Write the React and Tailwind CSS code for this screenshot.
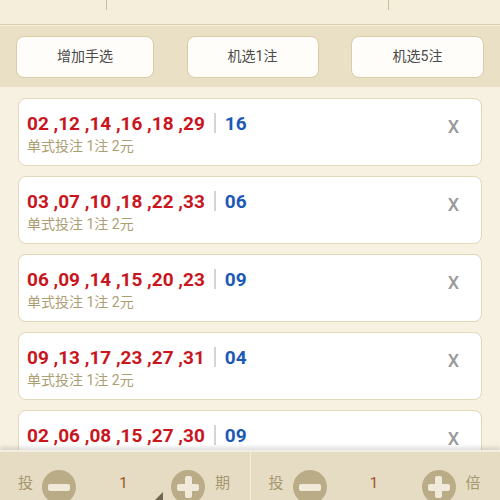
import React from 'react';

const tickets = [
  { reds: '02 ,12 ,14 ,16 ,18 ,29', blue: '16' },
  { reds: '03 ,07 ,10 ,18 ,22 ,33', blue: '06' },
  { reds: '06 ,09 ,14 ,15 ,20 ,23', blue: '09' },
  { reds: '09 ,13 ,17 ,23 ,27 ,31', blue: '04' },
  { reds: '02 ,06 ,08 ,15 ,27 ,30', blue: '09' },
];

const font = { fontFamily: 'Roboto, "Noto Sans CJK SC", sans-serif' };

function Circle({ plus }) {
  return (
    <div className="relative w-[34px] h-[34px] rounded-full bg-[#b9ac86] shrink-0 flex items-center justify-center">
      <div className="w-[22px] h-[7px] rounded-[2px] bg-[#f1eadb]" />
      {plus && <div className="absolute w-[7px] h-[22px] rounded-[2px] bg-[#f1eadb]" />}
    </div>
  );
}

function Stepper({ unit, showCorner }) {
  return (
    <div className="relative flex-1 flex items-start pt-[18px] pl-[18px]">
      <span className="text-[15px] text-[#a5976f] mt-[2px] w-[24px]">投</span>
      <Circle />
      <span className="text-[15px] text-[#9b5424] mt-[2px] w-[95px] text-center">1</span>
      <Circle plus />
      <span className="text-[15px] text-[#a5976f] mt-[2px] ml-[10px]">{unit}</span>
      {showCorner && (
        <div className="absolute left-[155px] bottom-0 w-0 h-0 border-l-[8px] border-l-transparent border-b-[8px] border-b-[#6f6750]" />
      )}
    </div>
  );
}

export default function App() {
  return (
    <div className="w-[500px] h-[500px] flex flex-col overflow-hidden bg-[#f7f1e2]" style={font}>
      <div className="h-[25px] bg-[#f5eedb] border-b border-[#d8ceb0] relative shrink-0">
        <div className="absolute left-[106px] top-0 w-[1px] h-[10px] bg-[#c8bd9c]" />
        <div className="absolute left-[388px] top-0 w-[1px] h-[10px] bg-[#c8bd9c]" />
      </div>
      <div className="h-[63px] shrink-0 bg-[#e9e0c6] border-t border-[#f7f1e2] border-b border-[#d6cbab] flex items-center justify-between px-[16px]">
        <button className="w-[138px] h-[42px] rounded-[8px] bg-[#fffdf9] border border-[#d9cca8] text-[14px] text-[#4a4a4a]">增加手选</button>
        <button className="w-[132px] h-[42px] rounded-[8px] bg-[#fffdf9] border border-[#d9cca8] text-[14px] text-[#4a4a4a]">机选1注</button>
        <button className="w-[133px] h-[42px] rounded-[8px] bg-[#fffdf9] border border-[#d9cca8] text-[14px] text-[#4a4a4a]">机选5注</button>
      </div>
      <div className="flex-1 overflow-hidden flex flex-col gap-[10px] pt-[10px] px-[18px]">
        {tickets.map((t, i) => (
          <div key={i} className="h-[68px] shrink-0 rounded-[8px] bg-white border border-[#e2d7b9] flex items-center pl-[8px] pr-[22px]">
            <div className="flex-1 flex flex-col pt-[2px]">
              <div className="flex items-center leading-none">
                <span className="text-[19px] font-bold text-[#c9161e] whitespace-pre">{t.reds}</span>
                <span className="w-[2px] h-[20px] bg-[#d4d4d4] mx-[9px]" />
                <span className="text-[19px] font-bold text-[#1b59b6]">{t.blue}</span>
              </div>
              <span className="text-[14px] text-[#ac9e73] leading-none mt-[6px]">单式投注 1注 2元</span>
            </div>
            <span className="self-start mt-[19px] text-[18px] font-medium text-[#9a9a9a] leading-none">X</span>
          </div>
        ))}
      </div>
      <div className="h-[50px] shrink-0 bg-[#e6dcc3] border-t-2 border-[#f3eee2] shadow-[0_-3px_4px_rgba(0,0,0,0.12)] flex relative z-10">
        <Stepper unit="期" showCorner />
        <div className="w-[1px] bg-[#f3eee2]" />
        <Stepper unit="倍" />
      </div>
    </div>
  );
}
